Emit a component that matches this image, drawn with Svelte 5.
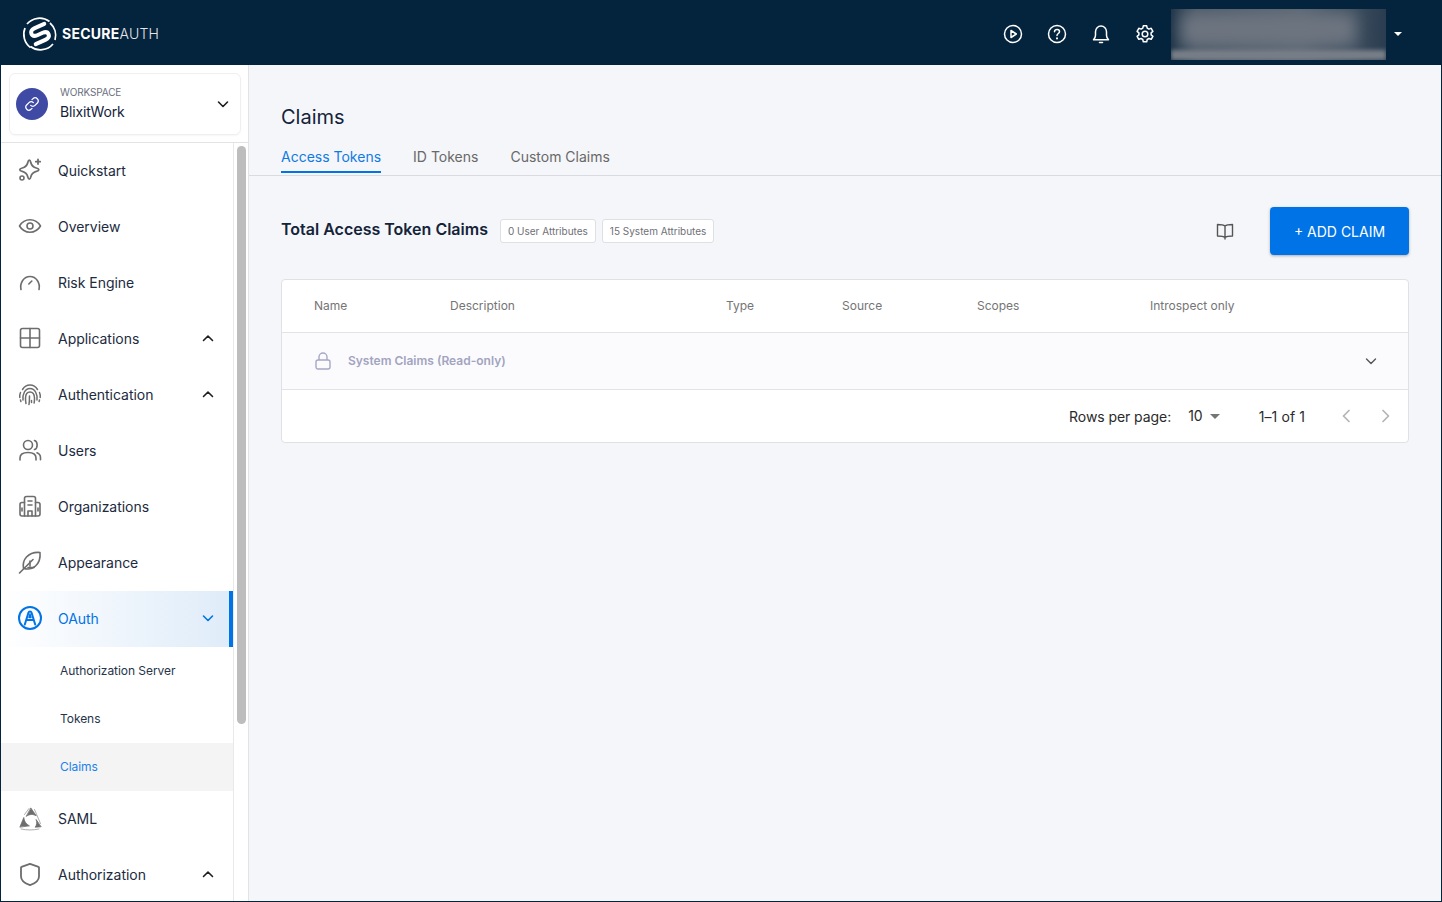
<script>
  const stroke = { fill: 'none', stroke: 'currentColor', 'stroke-width': 1.6, 'stroke-linecap': 'round', 'stroke-linejoin': 'round' };
  const nav = [
    { id: 'quickstart', label: 'Quickstart' },
    { id: 'overview', label: 'Overview' },
    { id: 'risk', label: 'Risk Engine' },
    { id: 'apps', label: 'Applications', chevron: 'up' },
    { id: 'auth', label: 'Authentication', chevron: 'up' },
    { id: 'users', label: 'Users' },
    { id: 'orgs', label: 'Organizations' },
    { id: 'appearance', label: 'Appearance' },
    { id: 'oauth', label: 'OAuth', chevron: 'down', active: true, children: [
      { label: 'Authorization Server' }, { label: 'Tokens' }, { label: 'Claims', active: true }
    ] },
    { id: 'saml', label: 'SAML' },
    { id: 'authz', label: 'Authorization', chevron: 'up' }
  ];
  const columns = ['Name', 'Description', 'Type', 'Source', 'Scopes', 'Introspect only'];
</script>

{#snippet navIcon(id)}
  <svg class="nav-icon" width="26" height="26" viewBox="0 0 26 26" {...stroke}>
    {#if id === 'quickstart'}
      <path d="M12.300 3.200c.9 0 1.200 1 1.500 2.300.7 3 2.100 4.600 5.500 5.500 1.600.4 2.500.8 2.500 1.700s-.9 1.300-2.500 1.700c-3.400.9-4.800 2.500-5.500 5.500-.3 1.300-.6 2.300-1.500 2.300s-1.200-1-1.500-2.300c-.7-3-2.100-4.600-5.500-5.500-1.600-.4-2.500-.8-2.500-1.700s.9-1.300 2.500-1.700c3.400-.9 4.800-2.500 5.500-5.500.3-1.300.6-2.300 1.500-2.300z" stroke-width="1.800"/>
      <path d="M21 2.500v4.500M18.800 4.700h4.400" stroke-width="1.800"/><circle cx="5" cy="21" r="2"/>
    {:else if id === 'overview'}
      <path d="M2.500 13C5 8.800 8.600 6.800 13 6.800s8 2 10.500 6.200C21 17.200 17.400 19.200 13 19.200S5 17.200 2.500 13z"/><circle cx="13" cy="13" r="3"/>
    {:else if id === 'risk'}
      <path d="M4 20.500C2.600 13.800 6.800 7.500 13 7.500s10.400 6.300 9 13"/><path d="M11.800 15l3-3"/>
    {:else if id === 'apps'}
      <rect x="3.500" y="3.500" width="19" height="19" rx="2"/><path d="M13 3.500v19M3.500 13h19"/>
    {:else if id === 'auth'}
      <g stroke-width="1.500">
        <path d="M5.500 8.500C7.300 5.500 10 4 13 4s5.700 1.500 7.500 4.500"/>
        <path d="M2.800 16.500c-.2-1.800 0-3.500.7-5M23.200 16.500c.2-1.800 0-3.500-.7-5"/>
        <path d="M6 19c-.6-6 2-11.500 7-11.500S20.600 13 20 19"/>
        <path d="M9 22.500c-.5-2-.5-3.500-.5-5.500.1-3 1.500-6 4.500-6s4.400 3 4.500 6c0 1.800 0 3.500-.4 5"/>
        <path d="M12 23.500c.5-3 .5-5 .5-8.500M14.500 21.500v-2M3.500 19l.4 1.500M22.500 19l-.4 1.500"/>
      </g>
    {:else if id === 'users'}
      <circle cx="11" cy="8" r="4.500"/><path d="M3 23v-2c0-3.500 3-5.500 8-5.500s8 2 8 5.500v2"/><path d="M17.500 3.500c3.500.8 3.500 8 0 9M20 15.800c2.300.8 3.500 2.500 3.500 5v2"/>
    {:else if id === 'orgs'}
      <path d="M7.500 23V5.500c0-1.200.8-2 2-2h7c1.200 0 2 .8 2 2V23"/><path d="M18.500 9.500h2.500c1.200 0 2 .8 2 2V21c0 1.200-.8 2-2 2H5c-1.200 0-2-.8-2-2v-9.500c0-1.200.8-2 2-2h2.500"/>
      <path d="M11 8h4M11 12h4M11 23v-5h4v5M5 15v3M21 15v3"/>
    {:else if id === 'appearance'}
      <path d="M2.500 24L16 10.500M6.500 19.500c-.8-4.500.2-8.500 3-11.500 3.300-3.400 8.500-5 13.500-4.500.5 5-.8 10.200-4.500 13.500-3 2.800-7.300 3.600-12 2.500z"/><path d="M11 18.500h6M13 12v5"/>
    {:else if id === 'oauth'}
      <circle cx="13" cy="13" r="11" stroke-width="2"/>
      <path stroke-width="2" d="M7.800 19.500L11.500 7.500c.4-1.200 2.600-1.200 3 0l3.700 12M9.500 15h7"/>
      <path stroke-width="1.400" d="M12 12.500l1-3.500 1 3.500z"/>
    {:else if id === 'saml'}
      <path d="M14 3.200l5.200 7.600c-3.200-1.900-6.700-1.800-9.700.4z" fill="currentColor" stroke-width=".8"/>
      <path d="M3 21.800l3.800-9.300c.3 3.600 2.100 6.500 5.300 8.200z" fill="currentColor" stroke-width=".8"/>
      <path d="M23.800 21.800l-5.600.4c1.600-2 2-4.800 1-7.400z" fill="currentColor" stroke-width=".8"/>
      <path d="M7.500 9.500L12 3.500M17.500 4.500l6 14M4 24c6 1.300 12 1.300 18 0" stroke-width="1" opacity=".55"/>
    {:else if id === 'authz'}
      <path d="M13 2.800l8.500 3c.3 0 .5.300.5.600v9c0 4-3.500 6.800-9 8.800-5.500-2-9-4.800-9-8.800v-9c0-.3.200-.6.500-.6z" stroke-width="1.800"/>
    {/if}
  </svg>
{/snippet}

{#snippet chev(dir)}
  <svg class="chev" width="14" height="14" viewBox="0 0 14 14" fill="none" stroke="currentColor" stroke-width="1.600" stroke-linecap="round" stroke-linejoin="round">
    {#if dir === 'up'}<path d="M2.500 9.500L7 5l4.500 4.500"/>{:else}<path d="M2.500 5L7 9.500 11.500 5"/>{/if}
  </svg>
{/snippet}

<div class="frame">
  <header class="topbar">
    <div class="brand">
      <svg width="38" height="38" viewBox="0 0 38 38" fill="none" stroke="#fff">
        <path d="M28.500 6.500A16.500 16.500 0 0 0 6 9M4 13a16.500 16.500 0 0 0 5.500 19.500M9.500 31.500A16.500 16.500 0 0 0 32 29M34 25a16.500 16.500 0 0 0-5-17" stroke-width="1.700"/>
        <g transform="rotate(-24 19 19)">
          <path d="M27 11.500H16c-3 0-4.800 1.600-4.800 3.800 0 2.200 1.800 3.700 4.800 3.700h6c3 0 4.800 1.500 4.800 3.700 0 2.200-1.800 3.800-4.800 3.800H11" stroke-width="4" stroke-linecap="round"/>
        </g>
      </svg>
      <span class="wordmark"><b>SECURE</b>AUTH</span>
    </div>
    <div class="top-actions">
      <svg class="top-icon" viewBox="0 0 20 20" fill="none" stroke="currentColor" stroke-width="1.500" stroke-linejoin="round"><circle cx="10" cy="10" r="8.500"/><path d="M8 6.500v7l5.300-3.500z"/></svg>
      <svg class="top-icon" viewBox="0 0 20 20" fill="none" stroke="currentColor" stroke-width="1.500" stroke-linecap="round"><circle cx="10" cy="10" r="8.500"/><path d="M7.500 7.700C7.700 6.300 8.700 5.600 10 5.600c1.500 0 2.500.9 2.500 2.100 0 1.800-2.500 1.900-2.500 3.900"/><path d="M10 14.300v.1" stroke-width="2"/></svg>
      <svg class="top-icon" viewBox="0 0 20 20" fill="none" stroke="currentColor" stroke-width="1.500" stroke-linecap="round" stroke-linejoin="round"><path d="M2.500 15.700h15c-1.300-1.300-2-2.500-2-4.500V7.700c0-3.200-2.400-5.700-5.500-5.700S4.500 4.500 4.500 7.700v3.500c0 2-.7 3.200-2 4.500z"/><path d="M8.500 18.500h3"/></svg>
      <svg class="top-icon" viewBox="0 0 20 20" fill="none" stroke="currentColor" stroke-width="1.500" stroke-linejoin="round"><path d="M8.300 1.800h3.400l.5 2.300 1.700 1 2.300-.8 1.700 3-1.800 1.500v2l1.800 1.500-1.700 3-2.300-.8-1.700 1-.5 2.300H8.300l-.5-2.300-1.700-1-2.300.8-1.700-3 1.800-1.500v-2L2.100 7.300l1.700-3 2.300.8 1.700-1z"/><circle cx="10" cy="10" r="2.800"/></svg>
      <div class="account"><div class="blur-a"></div><div class="blur-b"></div></div>
      <span class="caret"></span>
    </div>
  </header>

  <div class="body">
    <aside class="sidebar">
      <div class="ws-wrap">
        <div class="workspace">
          <span class="ws-avatar">
            <svg width="16" height="16" viewBox="0 0 24 24" fill="none" stroke="#fff" stroke-width="1.900" stroke-linecap="round"><path d="M10 14a4.500 4.500 0 006.500 0l3.500-3.500a4.600 4.600 0 00-6.500-6.500l-1.500 1.500"/><path d="M14 10a4.500 4.500 0 00-6.500 0L4 13.500a4.600 4.600 0 006.500 6.500l1.500-1.500"/></svg>
          </span>
          <div class="ws-text"><small>WORKSPACE</small><span>BlixitWork</span></div>
          <span class="ws-chev">{@render chev('down')}</span>
        </div>
      </div>
      <div class="nav-wrap">
        <nav class="nav">
          {#each nav as item}
            <div class="nav-item" class:active={item.active}>
              {@render navIcon(item.id)}
              <span class="nav-label">{item.label}</span>
              {#if item.chevron}{@render chev(item.chevron)}{/if}
            </div>
            {#if item.children}
              {#each item.children as c}
                <div class="sub-item" class:active={c.active}>{c.label}</div>
              {/each}
            {/if}
          {/each}
        </nav>
        <div class="scroll"><div class="thumb"></div></div>
      </div>
    </aside>

    <main class="main">
      <div class="page-head">
        <h1>Claims</h1>
        <div class="tabs">
          <span class="tab on">Access Tokens</span>
          <span class="tab">ID Tokens</span>
          <span class="tab">Custom Claims</span>
        </div>
      </div>
      <div class="content">
        <div class="toolbar">
          <h2>Total Access Token Claims</h2>
          <span class="chip">0 User Attributes</span>
          <span class="chip">15 System Attributes</span>
          <svg class="book" width="20" height="20" viewBox="0 0 20 20" fill="none" stroke="currentColor" stroke-width="1.400" stroke-linejoin="round" stroke-linecap="round"><path d="M10 5C8.500 3.700 6 3.500 2.500 3.500v11.500c3.500 0 6 .2 7.500 1.500 1.500-1.300 4-1.500 7.500-1.500V3.500C14 3.500 11.500 3.700 10 5zM10 5v13"/></svg>
          <button class="add">+ ADD CLAIM</button>
        </div>
        <section class="table">
          <div class="thead">
            {#each columns as c}<span>{c}</span>{/each}
          </div>
          <div class="group">
            <svg class="lock" width="16" height="18" viewBox="0 0 16 18" fill="none" stroke="currentColor" stroke-width="1.400"><rect x="1" y="8" width="14" height="9" rx="2"/><path d="M4 8V5a4 4 0 018 0v3"/></svg>
            <span class="group-title">System Claims (Read-only)</span>
            <svg class="group-chev" width="14" height="14" viewBox="0 0 14 14" fill="none" stroke="currentColor" stroke-width="1.400" stroke-linecap="round" stroke-linejoin="round"><path d="M2.500 5L7 9.500 11.500 5"/></svg>
          </div>
          <div class="pager">
            <span class="rpp">Rows per page:</span>
            <span class="rpp-val">10</span>
            <span class="rpp-caret"></span>
            <span class="range">1–1 of 1</span>
            <svg width="10" height="14" viewBox="0 0 10 14" fill="none" stroke="#b4b4b4" stroke-width="1.700" stroke-linecap="round" stroke-linejoin="round"><path d="M8 1.500L2.500 7 8 12.500"/></svg>
            <svg class="next" width="10" height="14" viewBox="0 0 10 14" fill="none" stroke="#b4b4b4" stroke-width="1.700" stroke-linecap="round" stroke-linejoin="round"><path d="M2 1.500L7.500 7 2 12.500"/></svg>
          </div>
        </section>
      </div>
    </main>
  </div>
</div>

<style>
  :global(body) { margin: 0; font-family: Inter, "Noto Sans", sans-serif; }
  .frame {
    width: 1442px; height: 902px; box-sizing: border-box; overflow: hidden;
    display: flex; flex-direction: column;
    border: 1px solid #04233d; border-top: 0; background: #f5f6f9; color: #14233a;
  }
  .topbar {
    flex: 0 0 65px; margin: 0 -1px; background: #04233d; color: #fff;
    display: flex; align-items: center; justify-content: space-between;
  }
  .brand { display: flex; align-items: center; gap: 3px; padding: 2px 0 0 21px; }
  .wordmark { font-size: 14px; letter-spacing: .25px; color: #e3e6ea; font-weight: 300; }
  .wordmark b { font-weight: 700; color: #fff; }
  .top-actions { display: flex; align-items: center; height: 100%; }
  .top-icon { width: 20px; height: 20px; margin: 2px 24px 0 0; color: #fff; }
  .top-icon:nth-child(4) { margin-right: 16px; }
  .account {
    width: 215px; height: 51px; align-self: flex-end; margin-bottom: 5px;
    position: relative; overflow: hidden;
    background: linear-gradient(90deg, #1e3448, #4a5867 12%, #5a6673 60%, #2a3d50);
  }
  .blur-a { position: absolute; inset: 4px 30px 14px 10px; background: #6d7580; filter: blur(8px); }
  .blur-b { position: absolute; left: 0; right: 0; bottom: 0; height: 10px; background: #777e87; filter: blur(2px); }
  .caret {
    width: 0; height: 0; margin: 2px 40px 0 8px;
    border: 4px solid transparent; border-top: 4px solid #fff; border-bottom: 0;
  }

  .body { flex: 1; display: flex; min-height: 0; }
  .sidebar {
    flex: 0 0 247px; background: #fff; border-right: 1px solid #e3e3e6;
    display: flex; flex-direction: column; min-height: 0;
  }
  .ws-wrap { flex: 0 0 78px; box-sizing: border-box; padding: 8px 7px 7px 8px; border-bottom: 1px solid #e3e3e6; }
  .workspace {
    height: 62px; box-sizing: border-box; border: 1px solid #efeff2; border-radius: 6px;
    display: flex; align-items: center; padding: 0 10px 0 6px;
    box-shadow: 0 1px 2px rgba(0,0,0,.04);
  }
  .ws-avatar {
    width: 32px; height: 32px; border-radius: 50%; background: #3f4aa5;
    display: flex; align-items: center; justify-content: center; flex: none;
  }
  .ws-text { flex: 1; margin: 1px 0 0 12px; display: flex; flex-direction: column; }
  .ws-text small { font-size: 10px; line-height: 14px; color: #6b7080; letter-spacing: -.15px; }
  .ws-text span { font-size: 14px; line-height: 24px; color: #14233a; letter-spacing: -.15px; margin-top: 1px; }
  .ws-chev { color: #222; display: flex; margin-top: -1px; }

  .nav-wrap { flex: 1; min-height: 0; display: flex; overflow: hidden; }
  .nav { flex: 0 0 232px; border-right: 1px solid #e9e9ec; box-sizing: content-box; }
  .nav-item {
    height: 56px; display: flex; align-items: center; padding: 0 18px 2px 16px;
    color: #6d6d6d; box-sizing: border-box; position: relative;
  }
  .nav-icon { flex: none; }
  .nav-label { flex: 1; margin-left: 15px; font-size: 14px; color: #1c2b40; letter-spacing: -.03px; }
  .chev { color: #1f1f1f; }
  .nav-item.active {
    background: linear-gradient(90deg, #fff, #dfecf9); border-right: 4px solid #0073e6;
    padding-right: 14px; color: #0073e6;
  }
  .nav-item.active .nav-label, .nav-item.active .chev { color: #0073e6; }
  .sub-item {
    height: 48px; box-sizing: border-box; display: flex; align-items: center; padding: 0 0 2px 59px;
    font-size: 12px; color: #27344a; letter-spacing: -.05px;
  }
  .sub-item.active { background: #f4f4f5; color: #1a82ea; }
  .scroll { flex: 1; padding: 3px 2px 0 3px; }
  .thumb { width: 9px; height: 578px; border-radius: 5px; background: #bdbdbd; }

  .main { flex: 1; min-width: 0; display: flex; flex-direction: column; }
  .page-head { border-bottom: 1px solid #d9dbe0; height: 111px; box-sizing: border-box; padding: 39px 32px 0; }
  h1 { margin: 0; font-size: 20px; line-height: 26px; font-weight: 400; color: #14233a; }
  .tabs { display: flex; gap: 32px; margin-top: 14px; }
  .tab { font-size: 14px; line-height: 20px; color: #686868; padding: 3px 0 4px; border-bottom: 2px solid transparent; }
  .tab.on { color: #0f7ae5; border-color: #0073e6; }

  .content { padding: 31px 32px 0; }
  .toolbar { display: flex; align-items: center; height: 48px; }
  h2 { margin: 0 12px 4px 0; font-size: 16px; font-weight: 600; color: #14233a; }
  .chip {
    height: 24px; box-sizing: border-box; background: #fff; border: 1px solid #dfe0e4; border-radius: 3px;
    padding: 0 7px; display: flex; align-items: center; font-size: 10px; color: #6f6f76; margin-right: 6px;
  }
  .book { margin-left: auto; color: #555; margin-right: 35px; margin-top: -1px; }
  .add {
    width: 139px; height: 48px; background: #0073e6; color: #fff; border: 0; border-radius: 4px;
    font: 400 14px Inter, sans-serif; box-shadow: 0 1px 3px rgba(0,0,0,.3);
  }

  .table {
    margin-top: 24px; background: #fff; border: 1px solid #e0e1e5; border-radius: 4px; height: 164px; box-sizing: border-box;
  }
  .thead {
    height: 53px; box-sizing: border-box; border-bottom: 1px solid #e3e3e6; padding: 0 0 2px 32px;
    display: grid; grid-template-columns: 136px 276px 116px 135px 173px 1fr; align-items: center;
    font-size: 12px; color: #757575;
  }
  .group {
    height: 57px; box-sizing: border-box; background: #fbfbfe; border-bottom: 1px solid #e3e3e6;
    display: flex; align-items: center; padding: 0 30px 1px 33px; color: #a6a8c4;
  }
  .group-title { flex: 1; margin-left: 17px; font-size: 12px; font-weight: 600; color: #a2a4c0; }
  .group-chev { color: #555; }
  .pager {
    height: 52px; display: flex; align-items: center; justify-content: flex-end; padding-right: 17px;
    font-size: 14px; color: #2a2a2a;
  }
  .rpp { letter-spacing: -.07px; }
  .rpp-val { margin-left: 17px; margin-top: -2px; }
  .rpp-caret { margin-left: 7px; width: 0; height: 0; border: 5px solid transparent; border-top: 5px solid #757575; border-bottom: 0; }
  .range { margin: 0 36px 0 39px; letter-spacing: .1px; }
  .next { margin-left: 30px; }
</style>
